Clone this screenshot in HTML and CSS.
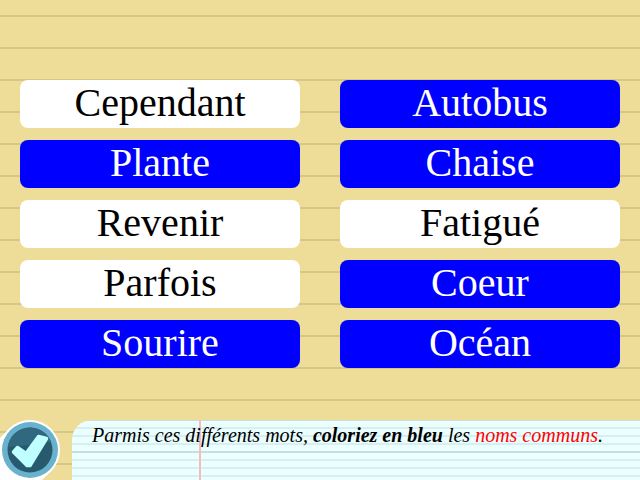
FILE: index.html
```
<!DOCTYPE html>
<html lang="fr">
<head>
<meta charset="utf-8">
<meta name="viewport" content="width=device-width, initial-scale=1">
<title>Noms communs</title>
<link rel="stylesheet" href="styles.css">
</head>
<body>
<main class="words">
  <button type="button" class="word" aria-pressed="false">Cependant</button>
  <button type="button" class="word" aria-pressed="false">Autobus</button>
  <button type="button" class="word" aria-pressed="false">Plante</button>
  <button type="button" class="word" aria-pressed="false">Chaise</button>
  <button type="button" class="word" aria-pressed="false">Revenir</button>
  <button type="button" class="word" aria-pressed="false">Fatigué</button>
  <button type="button" class="word" aria-pressed="false">Parfois</button>
  <button type="button" class="word" aria-pressed="false">Coeur</button>
  <button type="button" class="word" aria-pressed="false">Sourire</button>
  <button type="button" class="word" aria-pressed="false">Océan</button>
</main>
<footer class="bar">
  <button type="button" class="check" aria-label="Valider">
    <svg class="check-icon" viewBox="0 0 60 60" aria-hidden="true">
      <circle cx="30" cy="30" r="30" fill="#fff"/>
      <path d="M9 9L51 51L42 60H0V18Z" fill="#fff"/>
      <circle cx="30" cy="30" r="28" fill="#68b2cd"/>
      <circle cx="30" cy="30" r="22.500" fill="#285a6e"/>
      <path d="M7.700 27A22.500 22.500 0 0 1 51 22Q32 25 7.700 27Z" fill="#30697f"/>
      <path d="M13.500 32L17.500 27.500L26 33.500L38.500 16.500L46.500 18.500L30 45.500L27 45.500Z" fill="#bfffff" stroke="#bfffff" stroke-width="3.500" stroke-linejoin="round"/>
    </svg>
  </button>
  <p class="note">Parmis ces différents mots, <strong>coloriez en bleu</strong> les <span class="target">noms communs</span>.</p>
</footer>
<script src="script.js"></script>
</body>
</html>
```
FILE: styles.css
```
* {
  box-sizing: border-box;
}

body {
  margin: 0;
  min-height: 100vh;
  display: flex;
  flex-direction: column;
  font-family: "Liberation Serif", "Times New Roman", serif;
  background: repeating-linear-gradient(#eedd99 0 15px, #d6c689 15px 17px, #eedd99 17px 32px);
}

.words {
  flex: 1;
  display: grid;
  grid-template-columns: 1fr 1fr;
  align-content: start;
  gap: 12px 40px;
  padding: 80px 20px 20px;
}

.word {
  padding: 0 8px 2px;
  border: 0;
  border-radius: 8px;
  background: #fff;
  color: #000;
  font: inherit;
  font-size: 40px;
  line-height: 46px;
  text-align: center;
  cursor: pointer;
}

.word[aria-pressed="true"] {
  background: #00f;
  color: #fff;
}

.bar {
  display: flex;
  gap: 12px;
}

.check {
  flex: none;
  width: 60px;
  height: 60px;
  padding: 0;
  border: 0;
  background: none;
  cursor: pointer;
}

.check-icon {
  display: block;
  width: 60px;
  height: 60px;
}

.note {
  flex: 1;
  margin: 0;
  padding: 4px 20px;
  border-top-left-radius: 20px;
  background:
    linear-gradient(#f6bdc1, #f6bdc1) 127px 0 / 2px 100% no-repeat,
    repeating-linear-gradient(#cadddd 0 1px, #ebffff 1px 7px, #d7eff2 7px 9px, #ebffff 9px 15px, #d7eff2 15px 17px, #ebffff 17px 23px, #d7eff2 23px 25px, #ebffff 25px 31px, #cadddd 31px 32px);
  color: #000;
  font-size: 20px;
  font-style: italic;
  line-height: 23px;
}

.target {
  color: #f00;
}
```
FILE: script.js
```
const nouns = ["Autobus", "Plante", "Chaise", "Coeur", "Sourire", "Océan"];

for (const word of document.querySelectorAll(".word")) {
  word.setAttribute("aria-pressed", String(nouns.includes(word.textContent)));
  word.addEventListener("click", () => {
    const pressed = word.getAttribute("aria-pressed") === "true";
    word.setAttribute("aria-pressed", String(!pressed));
  });
}
```
